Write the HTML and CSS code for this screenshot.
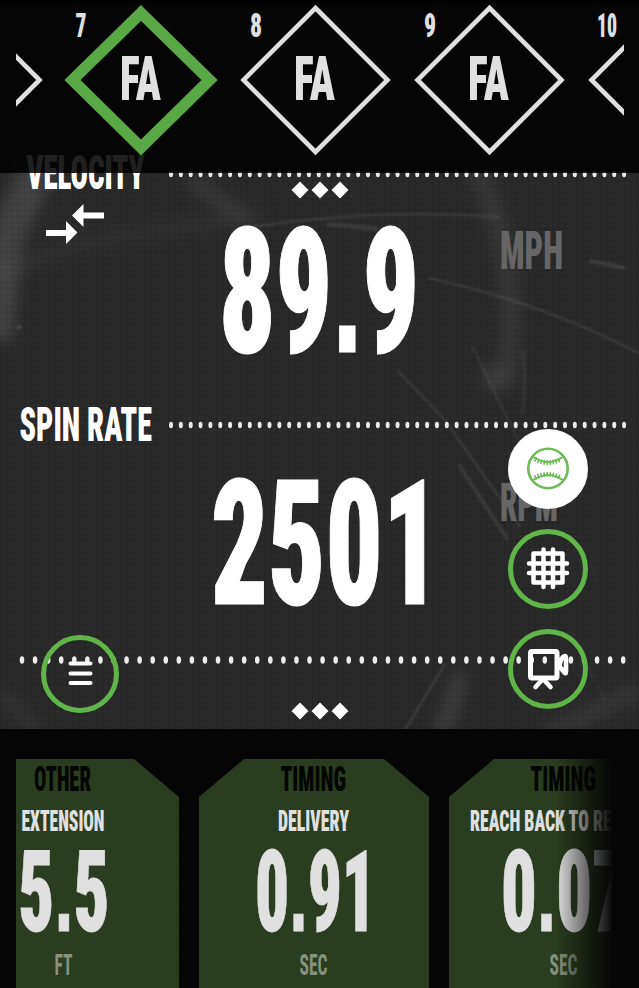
FILE: index.html
```html
<!DOCTYPE html>
<html lang="en">
<head>
<meta charset="utf-8">
<title>Pitch details</title>
<link rel="stylesheet" href="styles.css">
</head>
<body>
<div class="app">
  <svg class="backdrop" width="639" height="988" viewBox="0 0 639 988" fill="none" stroke="#fff" aria-hidden="true">
    <defs>
      <pattern id="weave" width="6" height="6" patternUnits="userSpaceOnUse">
        <path d="M0 .5H6M.5 0V6" stroke="#000" stroke-opacity=".06"/>
        <path d="M3 3.500H6M3.500 2V5" stroke="#fff" stroke-opacity=".013"/>
      </pattern>
      <filter id="soft" x="-50%" y="-50%" width="200%" height="200%"><feGaussianBlur stdDeviation="8"/></filter>
      <filter id="fine" x="-50%" y="-50%" width="200%" height="200%"><feGaussianBlur stdDeviation="1"/></filter>
    </defs>
    <g filter="url(#soft)" stroke-opacity=".1">
      <path d="M45 155L5 240L-5 340" stroke-width="34" stroke-opacity=".12"/>
      <path d="M0 275Q60 245 135 234T265 217" stroke-width="9" stroke-opacity=".06"/>
      <path d="M190 180L245 218" stroke-width="13" stroke-opacity=".09"/>
      <path d="M475 165Q525 270 505 385" stroke-width="20" stroke-opacity=".065"/>
      <path d="M484 372L505 385" stroke-width="22" stroke-opacity=".08"/>
      <path d="M460 673Q455 705 440 735" stroke-width="12" stroke-opacity=".13"/>
      <path d="M545 735L639 690" stroke-width="14" stroke-opacity=".08"/>
      <path d="M0 690L40 735" stroke-width="12" stroke-opacity=".06"/>
    </g>
    <g filter="url(#fine)" stroke-opacity=".13" stroke-width="1.6">
      <path d="M245 228Q370 208 500 217"/>
      <path d="M327 224L378 229" stroke-width="5" stroke-opacity=".08"/>
      <path d="M428 278Q540 302 639 353"/>
      <path d="M590 261L625 268" stroke-width="4" stroke-opacity=".1"/>
      <path d="M472 346L518 440" stroke-opacity=".1"/>
      <path d="M523 350Q526 390 522 415" stroke-opacity=".1"/>
      <path d="M397 370L445 420L520 527"/>
      <path d="M459 465L508 540" stroke-width="4" stroke-opacity=".08"/>
      <path d="M445 664L402 735"/>
      <path d="M593 565L597 583M570 630L605 700" stroke-opacity=".06"/>
      <circle cx="19" cy="327" r="2" fill="#fff" fill-opacity=".15" stroke="none"/>
    </g>
    <rect width="639" height="988" fill="url(#weave)" stroke="none"/>
  </svg>

  <header class="pitches">
    <div class="pitches__strip">
      <svg class="pitch" viewBox="0 0 174 173"><path d="M87 7.500L159.500 80L87 152.500L14.500 80Z"/></svg>
      <svg class="pitch pitch--active" viewBox="0 0 174 173">
        <path d="M87 13L155.500 80L87 147.500L18.500 80Z"/>
        <text x="21.500" y="37" font-size="34" textLength="11" lengthAdjust="spacingAndGlyphs">7</text>
        <text x="66" y="100" font-size="62" textLength="41" lengthAdjust="spacingAndGlyphs">FA</text>
      </svg>
      <svg class="pitch" viewBox="0 0 174 173">
        <path d="M87.500 8L159.500 80L87.500 152L15.500 80Z"/>
        <text x="22" y="37" font-size="34" textLength="12" lengthAdjust="spacingAndGlyphs">8</text>
        <text x="66" y="100" font-size="62" textLength="41" lengthAdjust="spacingAndGlyphs">FA</text>
      </svg>
      <svg class="pitch" viewBox="0 0 174 173">
        <path d="M87.500 8L159.500 80L87.500 152L15.500 80Z"/>
        <text x="22" y="37" font-size="34" textLength="12" lengthAdjust="spacingAndGlyphs">9</text>
        <text x="66" y="100" font-size="62" textLength="41" lengthAdjust="spacingAndGlyphs">FA</text>
      </svg>
      <svg class="pitch" viewBox="0 0 174 173">
        <path d="M87.500 8L159.500 80L87.500 152L15.500 80Z"/>
        <text x="21" y="37" font-size="34" textLength="20" lengthAdjust="spacingAndGlyphs">10</text>
      </svg>
    </div>
  </header>

  <main class="metrics">
    <section class="metric metric--velocity">
      <div class="metric__head">
        <svg class="label velocity" viewBox="0 0 132 35"><text x="6.500" y="35" font-size="49" textLength="118" lengthAdjust="spacingAndGlyphs">VELOCITY</text></svg>
        <svg class="dots" viewBox="0 0 456 10"><path d="M2 3.100H456" transform="scale(1 1.600)" stroke-dasharray="0 9.850"/></svg>
      </div>
      <svg class="more" viewBox="0 0 58 18"><path d="M9 .5L17.500 9L9 17.500L.5 9ZM29 .5L37.500 9L29 17.500L20.500 9ZM49 .5L57.500 9L49 17.500L40.500 9Z"/></svg>
      <svg class="swap" viewBox="0 0 60 42"><path d="M27 11.500L38.500 0V8.500H59V14.500H38.500V23ZM32.500 28.500L21 17V26H1V32H21V40Z"/></svg>
      <div class="metric__body">
        <svg class="value" viewBox="0 0 210 125"><text x="4" y="124.500" font-size="175" textLength="200" lengthAdjust="spacingAndGlyphs">89<tspan class="point">.</tspan>9</text></svg>
        <svg class="unit" viewBox="0 0 64 38"><text x="1" y="38" font-size="53" textLength="63" lengthAdjust="spacingAndGlyphs">MPH</text></svg>
      </div>
    </section>
    <section class="metric metric--spin">
      <div class="metric__head">
        <svg class="label" viewBox="0 0 132 35"><text x="-.5" y="35" font-size="49" textLength="132.500" lengthAdjust="spacingAndGlyphs">SPIN RATE</text></svg>
        <svg class="dots" viewBox="0 0 456 10"><path d="M2 3.100H456" transform="scale(1 1.600)" stroke-dasharray="0 9.850"/></svg>
      </div>
      <div class="metric__body">
        <svg class="value" viewBox="0 0 210 125"><text x="-4" y="124.500" font-size="175" textLength="229" lengthAdjust="spacingAndGlyphs">2501</text></svg>
        <svg class="unit" viewBox="0 0 64 38"><text x="1" y="38" font-size="53" textLength="58" lengthAdjust="spacingAndGlyphs">RPM</text></svg>
      </div>
    </section>
    <svg class="dots dots--wide" viewBox="0 0 606 10"><path d="M2 3.100H604" transform="scale(1 1.600)" stroke-dasharray="0 13.070"/></svg>
    <svg class="more more--end" viewBox="0 0 58 18"><path d="M9 .5L17.500 9L9 17.500L.5 9ZM29 .5L37.500 9L29 17.500L20.500 9ZM49 .5L57.500 9L49 17.500L40.500 9Z"/></svg>
  </main>

  <footer class="stats">
    <div class="stats__strip">
      <article class="card card--other">
        <svg viewBox="0 0 230 229">
          <text class="card__group" x="85" y="32" font-size="35" textLength="57" lengthAdjust="spacingAndGlyphs">OTHER</text>
          <text x="72.500" y="72" font-size="29" textLength="83" lengthAdjust="spacingAndGlyphs">EXTENSION</text>
          <text class="card__value" x="69.500" y="172" font-size="113" textLength="91" lengthAdjust="spacingAndGlyphs">5<tspan class="point">.</tspan>5</text>
          <text class="card__unit" x="105.500" y="216" font-size="29" textLength="18" lengthAdjust="spacingAndGlyphs">FT</text>
        </svg>
      </article>
      <article class="card">
        <svg viewBox="0 0 230 229">
          <text class="card__group" x="81.500" y="32" font-size="35" textLength="65.500" lengthAdjust="spacingAndGlyphs">TIMING</text>
          <text x="79" y="72" font-size="29" textLength="71" lengthAdjust="spacingAndGlyphs">DELIVERY</text>
          <text class="card__value" x="56" y="172" font-size="113" textLength="121" lengthAdjust="spacingAndGlyphs">0<tspan class="point">.</tspan>91</text>
          <text class="card__unit" x="100.500" y="216" font-size="29" textLength="28" lengthAdjust="spacingAndGlyphs">SEC</text>
        </svg>
      </article>
      <article class="card">
        <svg viewBox="0 0 230 229">
          <text class="card__group" x="81.500" y="32" font-size="35" textLength="65.500" lengthAdjust="spacingAndGlyphs">TIMING</text>
          <text x="21" y="72" font-size="29" textLength="188" lengthAdjust="spacingAndGlyphs">REACH BACK TO RELEASE</text>
          <text class="card__value" x="52" y="172" font-size="113" textLength="127" lengthAdjust="spacingAndGlyphs">0<tspan class="point">.</tspan>07</text>
          <text class="card__unit" x="100.500" y="216" font-size="29" textLength="28" lengthAdjust="spacingAndGlyphs">SEC</text>
        </svg>
      </article>
    </div>
  </footer>

  <button class="fab fab--menu" aria-label="Menu">
    <svg viewBox="0 0 78 78"><path d="M29.500 28.500H49.500M29.500 38.500H49.500M29.500 48H49.500" stroke-width="4"/></svg>
  </button>
  <nav class="views">
    <button class="fab fab--on" aria-label="Ball">
      <svg viewBox="0 0 80 80">
        <circle cx="40" cy="39.500" r="19.700" stroke-width="2.600"/>
        <path d="M26 28.500Q40 37.500 54 28.500M26 50.500Q40 41.500 54 50.500" stroke-width="2"/>
        <path d="M27 30.200Q40 37 53 30.200M27 48.800Q40 42 53 48.800" stroke-width="4.800" stroke-dasharray="1.500 1.500" stroke-linecap="butt"/>
      </svg>
    </button>
    <button class="fab" aria-label="Zone">
      <svg viewBox="0 0 80 80"><path d="M25.500 24.500H54.500V53.500H25.500ZM35.500 20.500V58M45 20.500V58M21 34.500H59M21 44H59" stroke-width="4.500"/></svg>
    </button>
    <button class="fab" aria-label="Video">
      <svg viewBox="0 0 80 80"><rect x="22.500" y="22.500" width="26.500" height="26.500" rx="1.500" stroke-width="5"/><path d="M51.500 37.500Q52.500 28 57 27Q58 27 58 29.500V42.500Q58 45 56.500 43.500ZM34 51L27.500 58M36 51L42.500 58" stroke-width="4.600"/></svg>
    </button>
  </nav>
</div>
</body>
</html>
```
FILE: styles.css
```css
* { box-sizing: border-box; }

body {
  margin: 0;
  background: #282828;
}

.app {
  position: relative;
  width: 639px;
  height: 988px;
  overflow: hidden;
  background: #292929;
  font-family: "Roboto Condensed", Roboto, sans-serif;
  font-weight: 900;
}

svg {
  display: block;
  overflow: visible;
  flex: none;
}

text {
  fill: currentColor;
  stroke: none;
}

.point { font-family: "Liberation Sans", sans-serif; font-weight: 700; }

.backdrop {
  position: absolute;
  inset: 0;
  overflow: hidden;
}

.pitches {
  position: relative;
  z-index: 2;
  height: 173px;
  padding: 0 15px 0 16px;
  background: rgba(0, 0, 0, .87);
  border-top: 3px solid #000;
}

.pitches__strip {
  display: flex;
  height: 173px;
  margin-top: -3px;
  overflow: hidden;
  color: #e0e0e0;
}

.pitch {
  width: 174px;
  height: 173px;
  fill: none;
  stroke: #e0e0e0;
  stroke-width: 4.6;
}

.pitch:first-child { margin-left: -136px; }

.pitch--active {
  stroke: #59a846;
  stroke-width: 11.4;
}

.metrics {
  display: flow-root;
  position: relative;
  z-index: 1;
  height: 556px;
  padding: 0 14px 0 20px;
  color: #fff;
}

.metric { height: 252px; }
.metric--velocity { margin-top: -19px; }
.metric--spin { height: 250px; }

.metric__head {
  display: flex;
  align-items: center;
  justify-content: space-between;
  height: 35px;
}

.label {
  width: 132px;
  height: 35px;
}

.dots {
  width: 456px;
  height: 10px;
  fill: none;
  stroke: #ececec;
  stroke-width: 4;
  stroke-linecap: round;
}

.metric--velocity .dots { margin-top: 4px; }
.metric--spin .dots { margin-top: 3px; }

.more {
  width: 58px;
  height: 18px;
  margin: -8px 0 0 271px;
  fill: #fff;
}

.swap {
  width: 60px;
  height: 42px;
  margin: 4.5px 0 0 25px;
  fill: #fff;
}

.metric__body {
  display: flex;
  align-items: flex-start;
  gap: 86px;
  padding-left: 195px;
}

.metric--velocity .metric__body { margin-top: -18.5px; }
.metric--spin .metric__body { padding-top: 38px; }

.value {
  width: 210px;
  height: 125px;
}

.value text {
  stroke: currentColor;
  stroke-width: 1.2;
}

.unit {
  width: 64px;
  height: 38px;
  margin-top: 4px;
  margin-left: -12px;
  color: #666;
}

.metric--velocity .unit { margin-top: 3.5px; }

.dots--wide {
  width: 606px;
  margin-top: -1px;
  stroke-width: 4.6;
}

.more--end { margin-top: 36.5px; }

.stats {
  position: relative;
  z-index: 2;
  height: 259px;
  padding: 30px 15px 0 16px;
  background: rgba(0, 0, 0, .87);
}

.stats::after {
  content: "";
  position: absolute;
  inset: 0 0 0 auto;
  width: 84px;
  background: linear-gradient(90deg, rgba(5, 5, 5, 0), #050505 58px);
}

.stats__strip {
  display: flex;
  gap: 20px;
  height: 229px;
  overflow: hidden;
}

.card {
  flex: none;
  width: 230px;
  height: 229px;
  background: #2b3d20;
  color: #e0e0e0;
  clip-path: polygon(45px 0, 185px 0, 100% 38px, 100% 100%, 0 100%, 0 38px);
}

.card--other { margin-left: -67px; }
.card__group { fill: #040603; }
.card__value { stroke: currentColor; stroke-width: .8; }
.card__unit { fill: #88927f; font-weight: 700; }

.fab {
  display: block;
  width: 80px;
  height: 80px;
  padding: 0;
  border: 5px solid #5fb548;
  border-radius: 50%;
  background: none;
}

.fab svg {
  width: 80px;
  height: 80px;
  margin: -5px;
  fill: none;
  stroke: #fff;
  stroke-linecap: round;
  stroke-linejoin: round;
}

.fab--on {
  border-color: #fff;
  background: #fff;
}

.fab--on svg { stroke: #6dbb57; }

.fab--menu {
  position: absolute;
  z-index: 3;
  left: 41px;
  top: 635px;
  width: 78px;
  height: 78px;
}

.fab--menu svg { width: 78px; height: 78px; }

.views {
  position: absolute;
  z-index: 3;
  left: 508px;
  top: 429px;
  display: flex;
  flex-direction: column;
  gap: 20px;
}
```
